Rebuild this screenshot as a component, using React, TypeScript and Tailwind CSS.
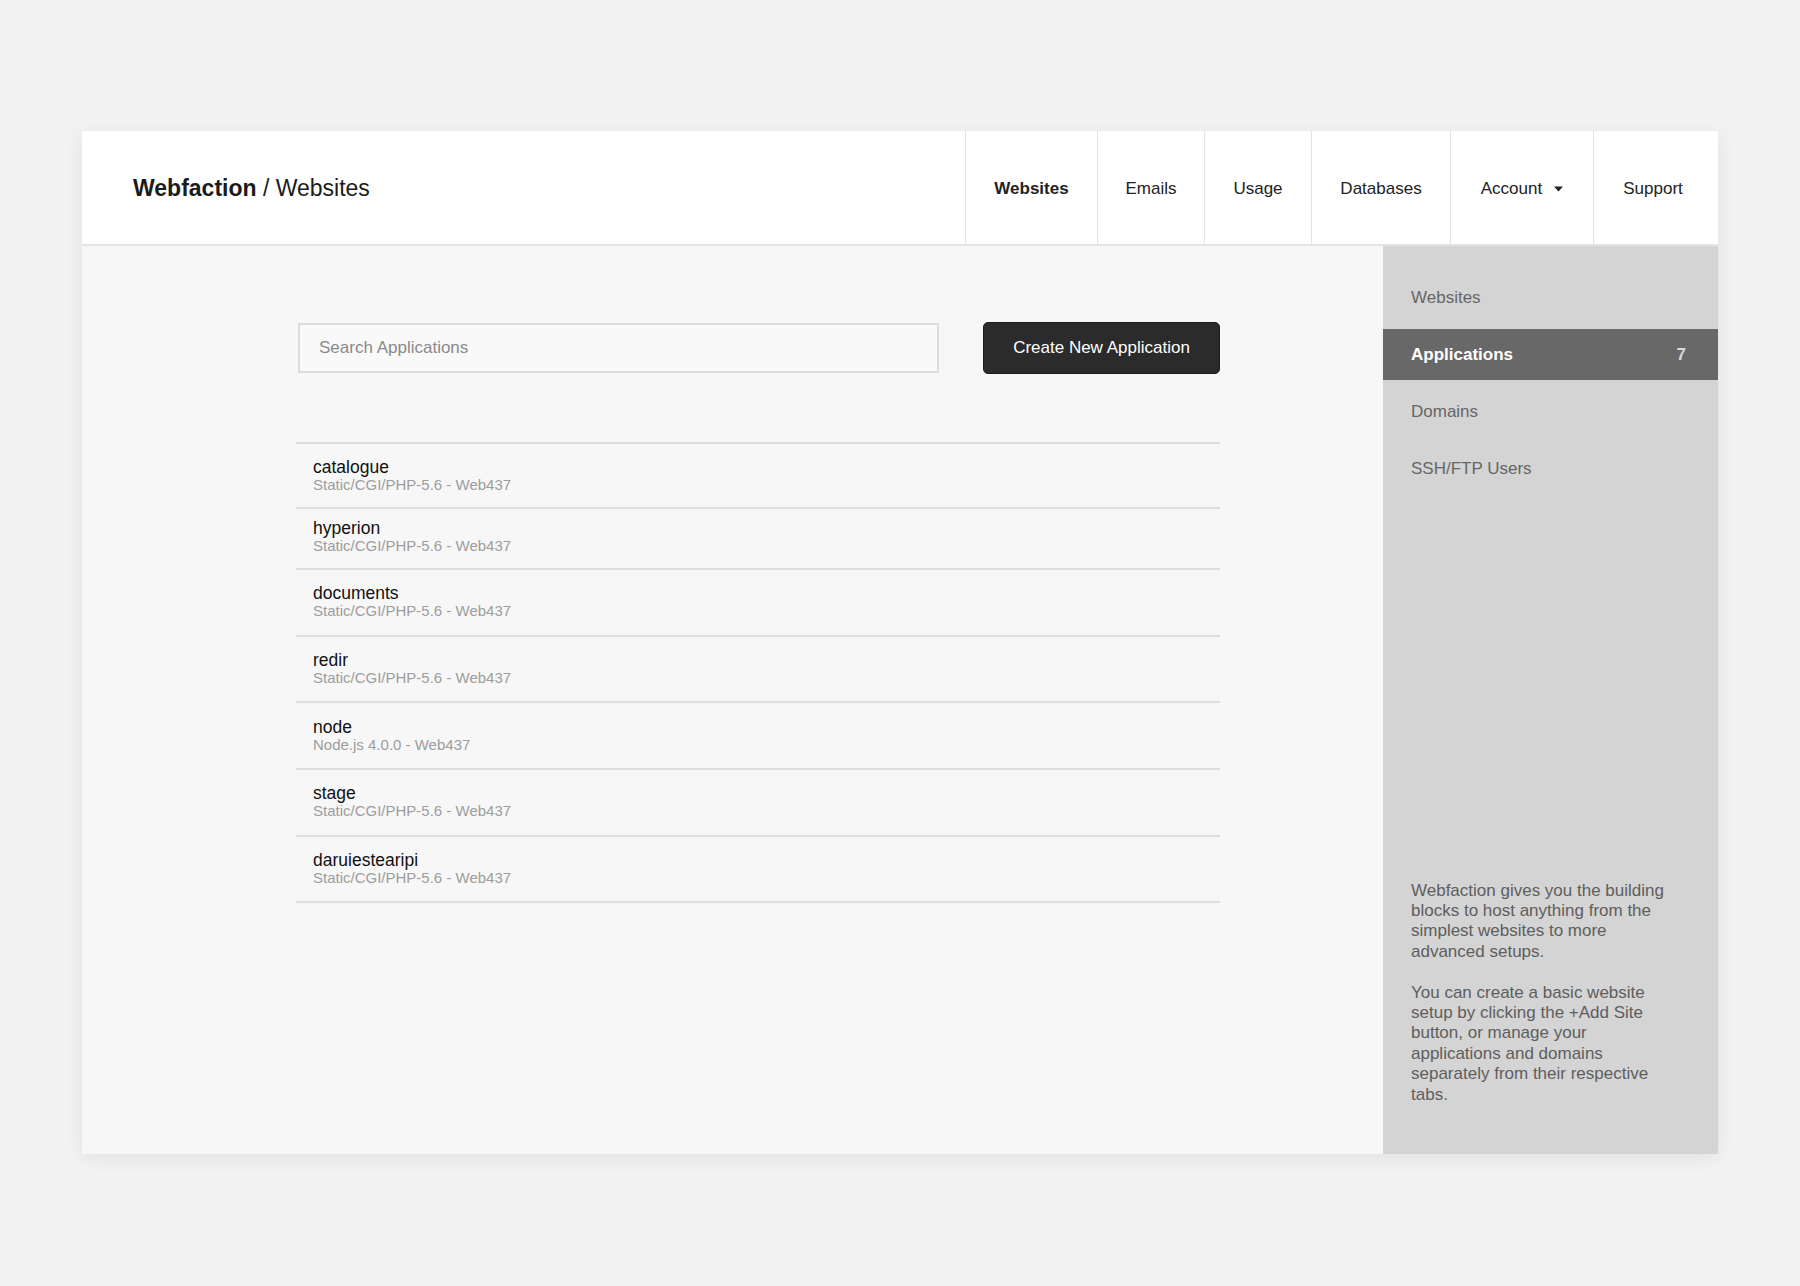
import { useState } from "react";

const navItems = [
  { label: "Websites", width: "w-[132px]", active: true },
  { label: "Emails", width: "w-[107px]" },
  { label: "Usage", width: "w-[107px]" },
  { label: "Databases", width: "w-[139px]" },
  { label: "Account", width: "w-[143px]", menu: true },
  { label: "Support", width: "w-[125px] pr-[6px]" },
];

const apps = [
  { name: "catalogue", type: "Static/CGI/PHP-5.6 - Web437", row: "h-[65px] pt-[14px]" },
  { name: "hyperion", type: "Static/CGI/PHP-5.6 - Web437", row: "h-[61px] pt-[10px]" },
  { name: "documents", type: "Static/CGI/PHP-5.6 - Web437", row: "h-[67px] pt-[14px]" },
  { name: "redir", type: "Static/CGI/PHP-5.6 - Web437", row: "h-[66px] pt-[14px]" },
  { name: "node", type: "Node.js 4.0.0 - Web437", row: "h-[67px] pt-[15px]" },
  { name: "stage", type: "Static/CGI/PHP-5.6 - Web437", row: "h-[67px] pt-[14px]" },
  { name: "daruiestearipi", type: "Static/CGI/PHP-5.6 - Web437", row: "h-[66px] pt-[14px]" },
];

const sideLinks = ["Websites", "Applications", "Domains", "SSH/FTP Users"];

function Caret() {
  return (
    <svg width="9" height="6" viewBox="0 0 9 6" className="ml-[12px]">
      <path d="M0 0.5h9L4.5 5.5z" fill="#222" />
    </svg>
  );
}

export default function App() {
  const [query, setQuery] = useState("");
  const visible = apps.filter((a) => a.name.includes(query.toLowerCase()));

  return (
    <div className="min-h-[1286px] w-full bg-[#f2f2f2] pt-[131px] font-['Liberation_Sans',Arial,sans-serif]">
      <div className="ml-[82px] w-[1636px] bg-white shadow-[0_4px_18px_rgba(0,0,0,0.07)]">
        {/* top bar */}
        <header className="flex h-[115px] items-stretch border-b-2 border-[#e4e4e4] bg-white">
          <div className="flex flex-1 items-center pl-[51px] pt-[2px] text-[23px] text-[#1b1b1b]">
            <span className="font-bold">Webfaction</span>
            <span className="whitespace-pre"> / Websites</span>
          </div>
          <nav className="flex">
            {navItems.map((item) => (
              <a
                key={item.label}
                className={`flex items-center justify-center border-l border-[#e2e2e2] pt-[2px] text-[17px] text-[#222] ${item.width} ${
                  item.active ? "font-bold" : ""
                }`}
              >
                {item.label}
                {item.menu && <Caret />}
              </a>
            ))}
          </nav>
        </header>

        <div className="flex h-[908px]">
          {/* application list */}
          <main className="flex-1 bg-[#f7f7f7] pl-[214px] pt-[76px]">
            <div className="w-[924px]">
              <div className="flex items-center justify-between">
                <input
                  value={query}
                  onChange={(e) => setQuery(e.target.value)}
                  placeholder="Search Applications"
                  className="ml-[2px] h-[50px] w-[641px] border-2 border-[#dddddd] bg-[#f9f9f9] pl-[19px] text-[17px] text-[#333] outline-none placeholder:text-[#8a8a8a]"
                />
                <button className="h-[52px] w-[237px] rounded-[5px] border border-[#1c1c1c] bg-[#2b2b2b] text-[17px] text-white">
                  Create New Application
                </button>
              </div>

              <ul className="mt-[68px] border-t-2 border-[#dedede]">
                {visible.map((app) => (
                  <li
                    key={app.name}
                    className={`flex flex-col border-b-2 border-[#dedede] pl-[17px] ${app.row}`}
                  >
                    <span className="text-[17.5px] leading-[18px] text-[#111]">{app.name}</span>
                    <span className="text-[15px] leading-[18px] text-[#9d9d9d]">{app.type}</span>
                  </li>
                ))}
              </ul>
            </div>
          </main>

          {/* sidebar */}
          <aside className="flex w-[335px] flex-col justify-between bg-[#d4d4d4] pb-[49px] pt-[26px]">
            <ul className="flex flex-col gap-[6px]">
              {sideLinks.map((link) => {
                const active = link === "Applications";
                return (
                  <li
                    key={link}
                    className={`flex h-[51px] items-center justify-between pl-[28px] pr-[32px] text-[17px] ${
                      active ? "bg-[#686868] font-bold text-white" : "text-[#666]"
                    }`}
                  >
                    {link}
                    {active && <span className="font-bold text-[#d8d8d8]">{apps.length}</span>}
                  </li>
                );
              })}
            </ul>
            <div className="pl-[28px] pr-[46px] text-[17px] leading-[20.4px] text-[#5e5e5e]">
              <p>
                Webfaction gives you the building blocks to host anything from the simplest
                websites to more advanced setups.
              </p>
              <p className="mt-[20.4px]">
                You can create a basic website setup by clicking the +Add Site button, or
                manage your applications and domains separately from their respective tabs.
              </p>
            </div>
          </aside>
        </div>
      </div>
    </div>
  );
}
